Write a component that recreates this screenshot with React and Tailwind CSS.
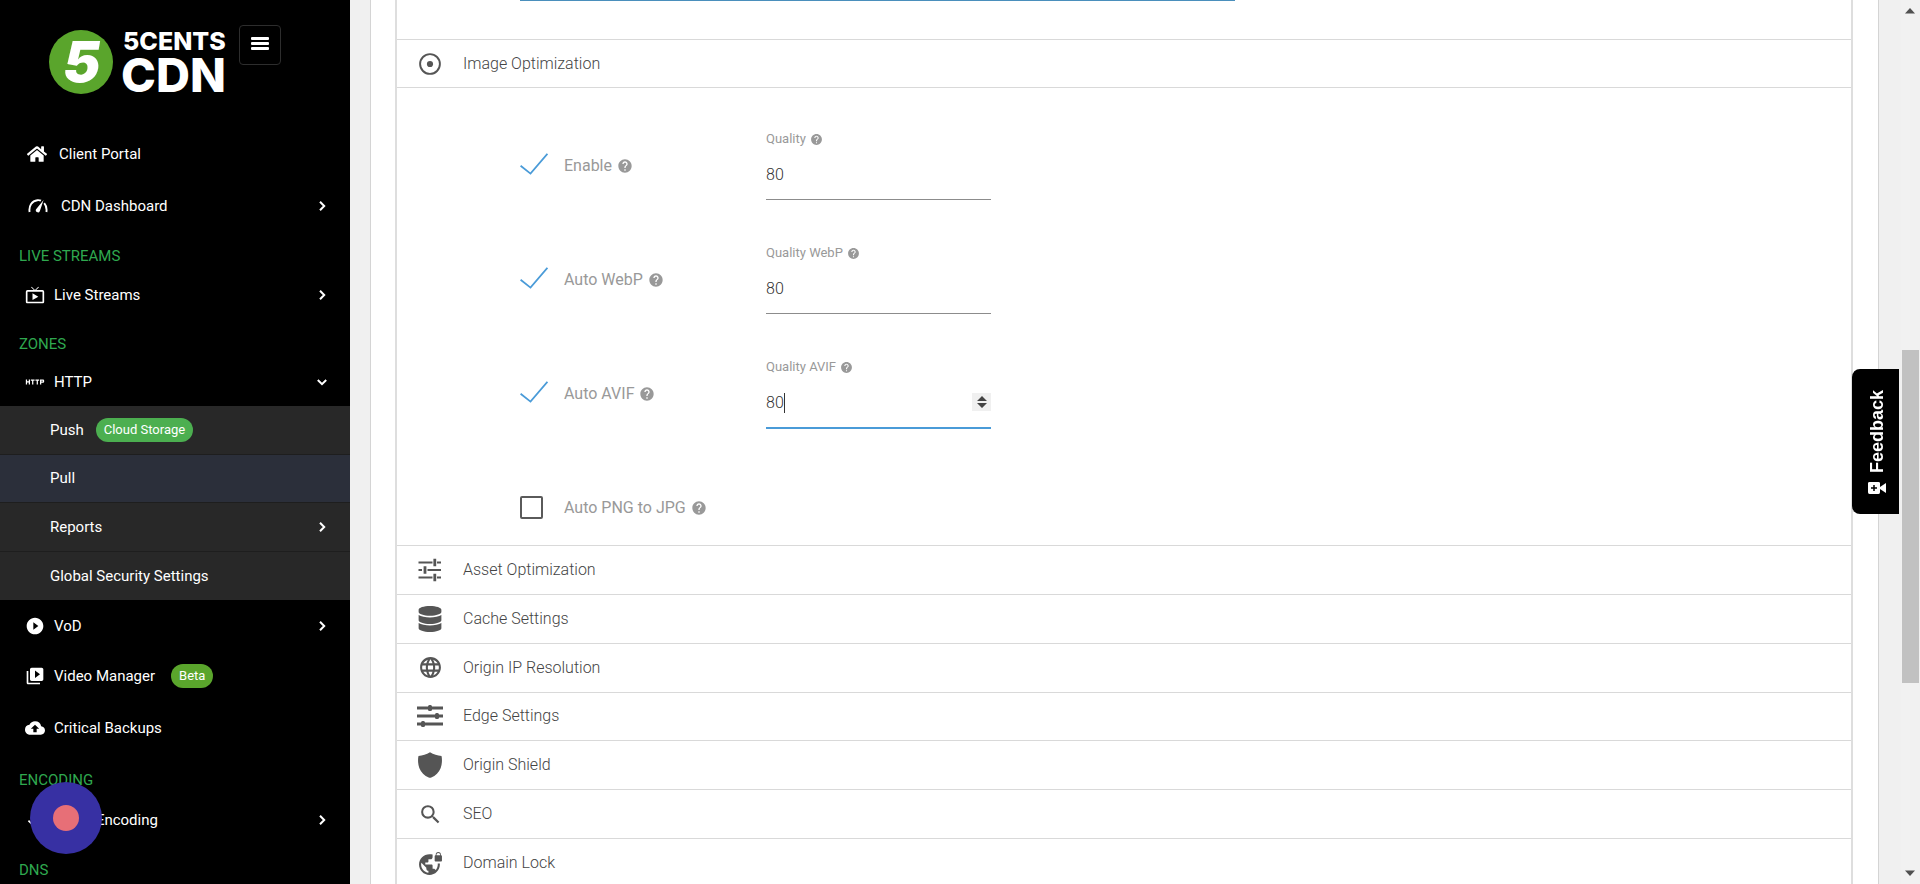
import { FaHome, FaDatabase } from "react-icons/fa";
import {
  MdBackup,
  MdCheck,
  MdHelp,
  MdHttp,
  MdLanguage,
  MdLiveTv,
  MdPlayCircleFilled,
  MdSearch,
  MdVideoLibrary,
  MdVpnLock,
} from "react-icons/md";

function Chevron({ down }) {
  return (
    <svg
      viewBox="0 0 12 12"
      className={down ? "size-3 rotate-90" : "size-3"}
      fill="none"
      stroke="currentColor"
      strokeWidth="2"
      aria-hidden="true"
    >
      <path d="M4 1.8 8.2 6 4 10.2" />
    </svg>
  );
}

function GaugeIcon() {
  return (
    <svg viewBox="0 0 20 14" className="h-[14px] w-5" aria-hidden="true">
      <path
        d="M1.6 13C.6 7 4 1.6 9.4 1.2c1.400-.1 2.800.1 3.600.5M16.200 4.200c2 2.300 2.700 5.500 2.200 8.800"
        fill="none"
        stroke="currentColor"
        strokeWidth="1.900"
      />
      <path d="M15.600 1 11.800 12.200a2.100 2.100 0 1 1-3.700-2z" fill="currentColor" />
    </svg>
  );
}

function TargetIcon() {
  return (
    <svg viewBox="0 0 24 24" className="size-6" aria-hidden="true">
      <circle cx="12" cy="12" r="9.900" fill="none" stroke="currentColor" strokeWidth="1.900" />
      <circle cx="12" cy="12" r="3.100" fill="currentColor" />
    </svg>
  );
}

function TuneIcon() {
  return (
    <svg viewBox="0 0 24 24" className="size-6" aria-hidden="true">
      <path
        d="M.5 4.500h14M19 4.500h4M.5 12h3.500M9.500 12H23M.5 19.500h14M19 19.500h4"
        stroke="currentColor"
        strokeWidth="1.900"
      />
      <path d="M16.800.8v7.400M7 8.300v7.400M16.800 15.800v7.400" stroke="currentColor" strokeWidth="2.800" />
    </svg>
  );
}

function SlidersIcon() {
  return (
    <svg viewBox="0 0 26 22" className="h-[22px] w-[26px]" aria-hidden="true">
      <path d="M0 3h26M0 11h26M0 19h26" stroke="currentColor" strokeWidth="3" />
      <g fill="currentColor">
        <rect x="11" y="0" width="4" height="6" rx="1.500" />
        <rect x="18" y="8" width="4" height="6" rx="1.500" />
        <rect x="4" y="16" width="4" height="6" rx="1.500" />
      </g>
    </svg>
  );
}

function ShieldIcon() {
  return (
    <svg viewBox="0 0 24 26" className="h-[26px] w-6" aria-hidden="true">
      <path
        d="M12 .3c3.600 2.200 7.400 3.300 11.500 3.600.8 3.400.6 8.300-.8 12.100-1.600 4.200-5.200 7.900-9.400 9.600-.9.300-1.700.3-2.600 0C6.500 23.900 2.900 20.200 1.300 16-.1 12.200-.3 7.300.5 3.900 4.600 3.600 8.400 2.500 12 .3z"
        fill="currentColor"
      />
    </svg>
  );
}

function Logo() {
  return (
    <svg
      viewBox="0 0 180 66"
      className="h-[66px] w-[180px] overflow-visible"
      role="img"
      aria-label="5centsCDN"
      fontFamily="Inter, sans-serif"
      fontWeight="800"
      fill="#fff"
    >
      <circle cx="32" cy="32" r="32" fill="#5aa52c" />
      <text x="14" y="52" fontSize="56" fontStyle="italic" fontWeight="900">
        5
      </text>
      <text x="74" y="20" fontSize="25">
        5CENTS
      </text>
      <text x="72" y="62" fontSize="47">
        CDN
      </text>
    </svg>
  );
}

const ITEM_HEIGHTS = {
  sm: "h-12",
  md: "h-[50px]",
  lg: "h-[52px]",
  xl: "h-14",
};

function NavItem({ icon, label, size = "sm", arrow, badge, indent = "pl-[25px]", gap = "gap-[9px]" }) {
  return (
    <a href="#" className={`flex items-center pr-[22px] text-white ${indent} ${gap} ${ITEM_HEIGHTS[size]}`}>
      <span className="flex w-5 shrink-0 justify-center text-xl">{icon}</span>
      <span>{label}</span>
      {badge && (
        <span className="ml-[7px] rounded-full bg-[#5aa52c] px-2 text-[13px] leading-6">{badge}</span>
      )}
      {arrow && (
        <span className="ml-auto">
          <Chevron down={arrow === "down"} />
        </span>
      )}
    </a>
  );
}

function NavHeading({ children }) {
  return <h2 className="pt-[10px] pl-[19px] leading-7 text-[#2fa84f]">{children}</h2>;
}

function SubItem({ label, active, badge, arrow }) {
  return (
    <a
      href="#"
      className={`flex items-center border-b border-[#1e1e1e] pr-[22px] pl-[50px] text-white last:border-b-0 ${active ? "bg-[#2b2f3a]" : ""}`}
    >
      {label}
      {badge && (
        <span className="ml-3 rounded-full bg-[#4caf50] px-2 text-[13px] leading-6">{badge}</span>
      )}
      {arrow && (
        <span className="ml-auto">
          <Chevron />
        </span>
      )}
    </a>
  );
}

function Sidebar() {
  return (
    <aside className="w-[350px] shrink-0 overflow-hidden bg-black">
      <div className="flex h-32 items-start pt-[25px] pl-[49px]">
        <div className="pt-[5px]">
          <Logo />
        </div>
        <button
          type="button"
          aria-label="Toggle menu"
          className="ml-[10px] flex h-10 w-[42px] flex-col items-center justify-center gap-[2px] rounded border border-[#2d2d2d] pb-1"
        >
          <span className="h-[3px] w-[18px] rounded-[1px] bg-white" />
          <span className="h-[3px] w-[18px] rounded-[1px] bg-white" />
          <span className="h-[3px] w-[18px] rounded-[1px] bg-white" />
        </button>
      </div>
      <nav>
        <NavItem icon={<FaHome />} label="Client Portal" size="lg" indent="pl-[27px]" gap="gap-3" />
        <NavItem
          icon={<GaugeIcon />}
          label="CDN Dashboard"
          size="lg"
          arrow="right"
          indent="pl-[28px]"
          gap="gap-[13px]"
        />
        <NavHeading>LIVE STREAMS</NavHeading>
        <NavItem icon={<MdLiveTv />} label="Live Streams" size="md" arrow="right" />
        <NavHeading>ZONES</NavHeading>
        <NavItem icon={<MdHttp />} label="HTTP" arrow="down" />
        <div className="grid h-[194px] auto-rows-fr bg-[#282828]">
          <SubItem label="Push" badge="Cloud Storage" />
          <SubItem label="Pull" active />
          <SubItem label="Reports" arrow />
          <SubItem label="Global Security Settings" />
        </div>
        <NavItem icon={<MdPlayCircleFilled />} label="VoD" size="lg" arrow="right" />
        <NavItem icon={<MdVideoLibrary />} label="Video Manager" badge="Beta" />
        <NavItem icon={<MdBackup />} label="Critical Backups" size="xl" />
        <NavHeading>ENCODING</NavHeading>
        <NavItem icon={<MdCheck />} label="Video Encoding" size="lg" arrow="right" />
        <NavHeading>DNS</NavHeading>
      </nav>
    </aside>
  );
}

function CheckField({ id, label, checked }) {
  return (
    <div className="flex h-[30px] w-[246px] shrink-0 items-center">
      <span className="relative flex h-6 w-[44px] items-center">
        <input
          id={id}
          type="checkbox"
          defaultChecked={checked}
          className="peer size-[23px] appearance-none rounded-[2px] border-2 border-[#5a5a5a] checked:border-transparent"
        />
        <svg
          viewBox="0 0 28 22"
          className="pointer-events-none absolute top-0 left-0 hidden h-[22px] w-7 peer-checked:block"
          fill="none"
          stroke="#4a9bd8"
          strokeWidth="1.800"
          aria-hidden="true"
        >
          <path d="M.6 12.800 10.500 20.600 27.400.8" />
        </svg>
      </span>
      <label htmlFor={id} className="flex items-center gap-[5px] pt-[2px] whitespace-nowrap text-[#999]">
        {label}
        <MdHelp className="size-4" />
      </label>
    </div>
  );
}

function QualityField({ id, label, focused }) {
  return (
    <div className="w-[225px]">
      <label htmlFor={id} className="flex items-center gap-1 text-[13px] leading-5 text-[#999]">
        {label}
        <MdHelp className="size-[13px]" />
      </label>
      <div
        className={`relative pt-[14px] ${focused ? "h-[52px] border-b-2 border-[#4a9bd8]" : "h-[51px] border-b border-[#8c8c8c]"}`}
      >
        <input
          id={id}
          type="number"
          defaultValue={80}
          className="block w-full appearance-none bg-transparent leading-6 font-light text-[#333] outline-none [appearance:textfield]"
        />
        {focused && (
          <>
            <span className="absolute top-4 left-[18px] h-5 w-px bg-[#333]" />
            <span className="absolute top-4 right-0 flex h-[18px] w-[19px] items-center justify-center bg-[#f0f0f0]">
              <svg viewBox="0 0 10 12" className="h-3 w-[10px]" fill="#444" aria-hidden="true">
                <path d="M5 0 10 5H0zM5 12 0 7h10z" />
              </svg>
            </span>
          </>
        )}
      </div>
    </div>
  );
}

function OptionRow({ id, label, quality, focused }) {
  return (
    <div className="flex h-[114px]">
      <div className="pt-[21px]">
        <CheckField id={id} label={label} checked />
      </div>
      <QualityField id={`${id}-quality`} label={quality} focused={focused} />
    </div>
  );
}

function Section({ icon, title }) {
  return (
    <button
      type="button"
      className="flex min-h-12 w-full items-center border-t border-[#d9d9d9] pl-5 text-left text-[#444]"
    >
      <span className="flex w-[26px] shrink-0 justify-center text-[#555]">{icon}</span>
      <span className="ml-5">{title}</span>
    </button>
  );
}

function Scrollbar() {
  return (
    <div className="flex w-[19px] shrink-0 flex-col items-center bg-[#f1f1f1] pr-px" aria-hidden="true">
      <svg viewBox="0 0 10 6" className="mt-2 h-[6px] w-[10px]" fill="#505050">
        <path d="M5 0 10 5.500H0z" />
      </svg>
      <div className="mt-[336px] h-[333px] w-[17px] bg-[#c1c1c1]" />
      <svg viewBox="0 0 10 6" className="mt-auto mb-2 h-[6px] w-[10px]" fill="#505050">
        <path d="M0 .5h10L5 6z" />
      </svg>
    </div>
  );
}

export default function App() {
  return (
    <div className="flex h-screen overflow-hidden bg-[#f0f0f0] font-[Roboto,sans-serif] text-[15px]">
      <Sidebar />
      <main className="min-w-0 flex-1 pr-[22px] pl-5">
        <div className="h-full border-x border-[#d4d4d4] bg-white pr-[25px] pl-6">
          <div className="min-h-full border-x-2 border-[#dedede] text-base font-light">
            <div className="h-[39px] pl-[123px]">
              <div className="h-px w-[715px] bg-[#4a8fbc]" />
            </div>
            <Section icon={<TargetIcon />} title="Image Optimization" />
            <div className="h-[458px] border-t border-[#d9d9d9] pt-[41px] pl-[123px] font-normal">
              <OptionRow id="enable" label="Enable" quality="Quality" />
              <OptionRow id="webp" label="Auto WebP" quality="Quality WebP" />
              <OptionRow id="avif" label="Auto AVIF" quality="Quality AVIF" focused />
              <div className="pt-[21px]">
                <CheckField id="png" label="Auto PNG to JPG" />
              </div>
            </div>
            <div className="grid h-[342px] auto-rows-fr">
              <Section icon={<TuneIcon />} title="Asset Optimization" />
              <Section icon={<FaDatabase className="size-[26px]" />} title="Cache Settings" />
              <Section icon={<MdLanguage className="size-[25px]" />} title="Origin IP Resolution" />
              <Section icon={<SlidersIcon />} title="Edge Settings" />
              <Section icon={<ShieldIcon />} title="Origin Shield" />
              <Section icon={<MdSearch className="size-[25px]" />} title="SEO" />
              <Section icon={<MdVpnLock className="size-[25px]" />} title="Domain Lock" />
            </div>
          </div>
        </div>
      </main>
      <Scrollbar />

      <button
        type="button"
        className="fixed top-[369px] right-[21px] flex h-[145px] w-[47px] rotate-180 items-center justify-center gap-[9px] rounded-r-lg bg-black pr-1 font-['Liberation_Sans',sans-serif] text-lg font-bold text-white [writing-mode:vertical-rl]"
      >
        <svg viewBox="0 0 18 12" className="h-3 w-[18px] rotate-180" aria-hidden="true">
          <rect x="0" y="0" width="12" height="12" rx="1.500" fill="#fff" />
          <path d="M12 5 18 1v10l-6-4z" fill="#fff" />
          <path d="M6 3v6M3 6h6" stroke="#000" strokeWidth="1.500" />
        </svg>
        Feedback
      </button>

      <button
        type="button"
        aria-label="Record"
        className="fixed bottom-[30px] left-[30px] flex size-[72px] items-center justify-center rounded-full bg-[#3730a3]"
      >
        <span className="size-[26px] rounded-full bg-[#e76f77]" />
      </button>
    </div>
  );
}
